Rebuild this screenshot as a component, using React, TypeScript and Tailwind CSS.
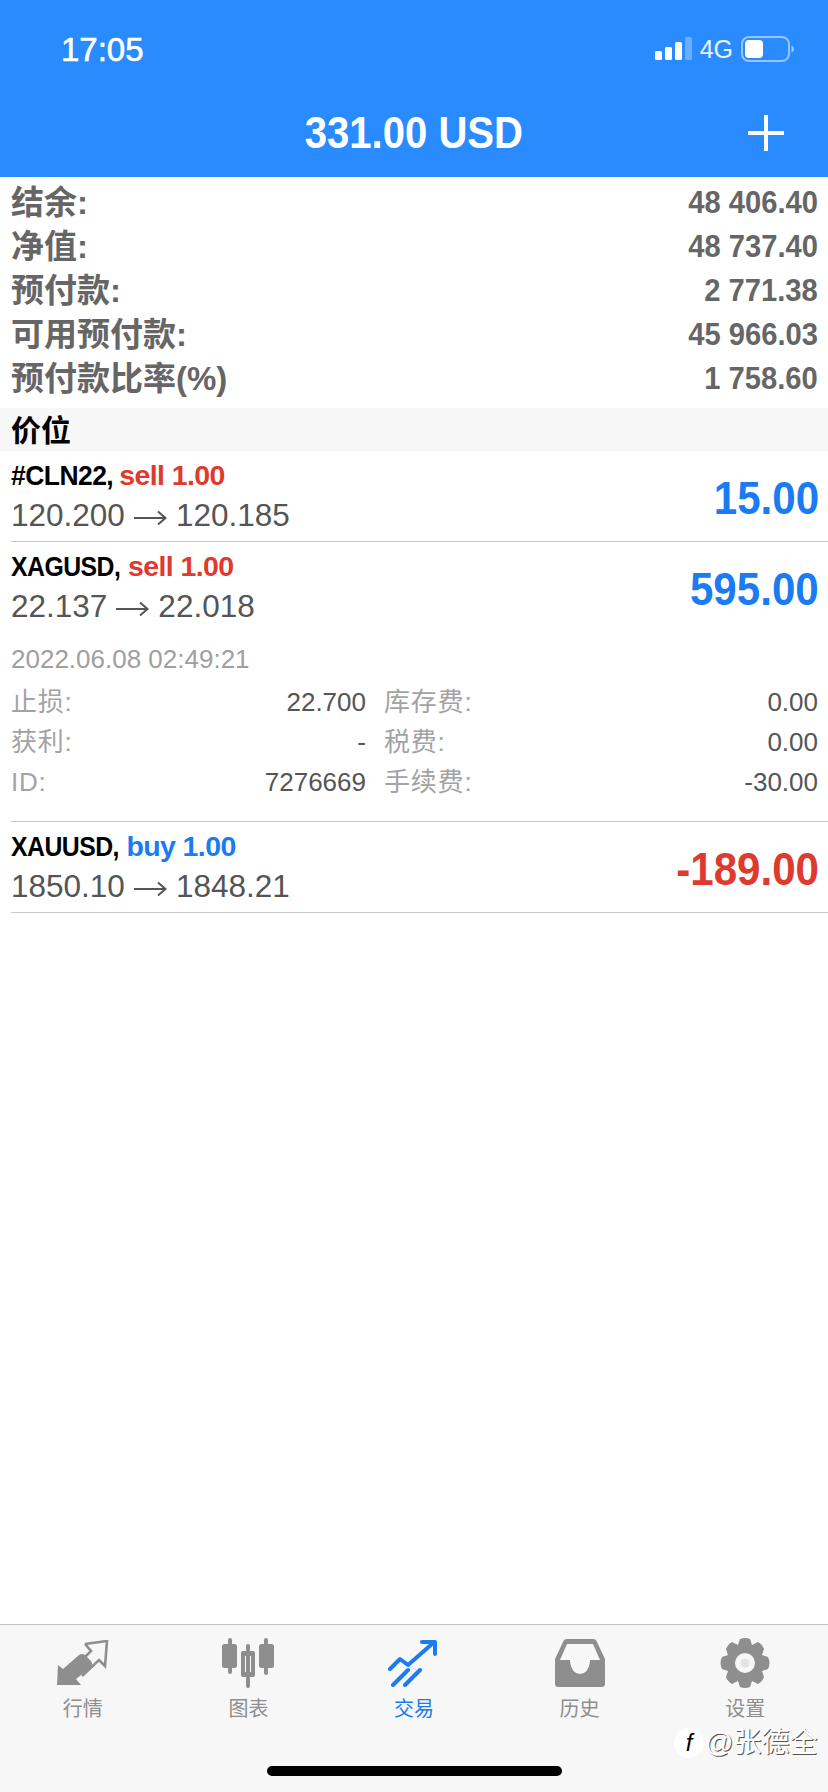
const font = { fontFamily: '"Liberation Sans","Noto Sans CJK SC",sans-serif' };

function Summary({ label, value }: { label: string; value: string }) {
  return (
    <div className="flex h-[44px] items-center justify-between pl-[11px] pr-[10px] text-[#666666]">
      <span className="text-[33px] font-semibold leading-none">{label}</span>
      <span className="origin-right scale-x-[0.94] text-[31px] font-bold leading-none">{value}</span>
    </div>
  );
}

function Arrow() {
  return (
    <svg className="mx-[9px] inline-block align-[-1px]" width="33" height="18" viewBox="0 0 33 18" fill="none" stroke="#555555" strokeWidth="2">
      <path d="M0 9H31M24 2.5L31.5 9L24 15.5" />
    </svg>
  );
}

function Position({ sym, symClass, side, sideClass, from, to, profit, profitClass }: { sym: string; symClass: string; side: string; sideClass: string; from: string; to: string; profit: string; profitClass: string }) {
  return (
    <div className="flex h-[90px] items-center justify-between pr-[9px]">
      <div className="flex flex-col pb-[2px]">
        <div className="h-[40px] text-[28.5px] font-bold leading-[40px] tracking-[-0.6px] text-black">
          <span className={symClass}>{sym},</span> <span className={sideClass}>{side}</span>
        </div>
        <div className="h-[40px] text-[31.5px] leading-[40px] text-[#555555]">
          {from}
          <Arrow />
          {to}
        </div>
      </div>
      <div className={`origin-right scale-x-[0.915] pt-[3px] text-[46px] font-bold leading-none ${profitClass}`}>{profit}</div>
    </div>
  );
}

function Detail({ label, value }: { label: string; value: string }) {
  return (
    <div className="flex h-[40px] items-center justify-between text-[26px] leading-none">
      <span className="tracking-[0.8px] text-[#a3a3a3]">{label}</span>
      <span className="text-[#555555]">{value}</span>
    </div>
  );
}

function Tab({ label, active, children }: { label: string; active?: boolean; children: React.ReactNode }) {
  return (
    <div className="flex flex-col items-center">
      <div className="flex h-[52px] w-[54px] items-center justify-center">{children}</div>
      <div className={`mt-[8px] text-[20px] leading-[24px] ${active ? "text-[#1a7bf2]" : "text-[#8e8e8e]"}`}>{label}</div>
    </div>
  );
}

export default function App() {
  return (
    <div className="flex h-[1792px] w-[828px] flex-col overflow-hidden bg-white" style={font}>
      <header className="h-[177px] shrink-0 bg-[#2a8bff] text-white">
        <div className="flex h-[98px] items-center justify-between pl-[61px] pr-[33px]">
          <span className="text-[33px] leading-none [-webkit-text-stroke:0.6px_white]">17:05</span>
          <div className="flex items-center">
            <svg width="38" height="24" viewBox="0 0 38 24" fill="#ffffff">
              <rect x="0" y="14" width="7" height="9" rx="1.5" />
              <rect x="10" y="10" width="7" height="13" rx="1.5" />
              <rect x="20" y="5" width="7" height="18" rx="1.5" />
              <rect x="30" y="0" width="7" height="23" rx="1.5" opacity="0.3" />
            </svg>
            <span className="ml-[7px] text-[25px] leading-none text-white/90">4G</span>
            <svg className="ml-[8px]" width="54" height="26" viewBox="0 0 54 26">
              <rect x="1" y="1" width="47" height="24" rx="7" fill="none" stroke="#ffffff" strokeOpacity="0.5" strokeWidth="2" />
              <rect x="4" y="4" width="18" height="18" rx="4" fill="#ffffff" />
              <path d="M50.5 9.5 C52.5 10.5 53 11.5 53 13 C53 14.5 52.5 15.5 50.5 16.5 Z" fill="#ffffff" fillOpacity="0.5" />
            </svg>
          </div>
        </div>
        <div className="grid h-[70px] grid-cols-[1fr_auto_1fr] items-center">
          <div />
          <div className="scale-x-[0.91] text-[44px] font-bold leading-none">331.00 USD</div>
          <div className="flex justify-end pr-[44px]">
            <svg width="36" height="36" viewBox="0 0 36 36" stroke="#ffffff" strokeWidth="4">
              <path d="M0 18H36M18 0V36" />
            </svg>
          </div>
        </div>
      </header>

      <section className="pt-[3px]">
        <Summary label="结余:" value="48 406.40" />
        <Summary label="净值:" value="48 737.40" />
        <Summary label="预付款:" value="2 771.38" />
        <Summary label="可用预付款:" value="45 966.03" />
        <Summary label="预付款比率(%)" value="1 758.60" />
      </section>

      <div className="mt-[8px] flex h-[43px] items-center bg-[#f7f7f7] pl-[11px] pt-[2px] text-[30px] font-semibold leading-none text-black">价位</div>

      <section className="pl-[11px]">
        <div className="border-b border-[#c8c8c8]">
          <Position sym="#CLN22" symClass="mr-[-9px] inline-block origin-left scale-x-[0.93]" side="sell 1.00" sideClass="text-[#df3a2e]" from="120.200" to="120.185" profit="15.00" profitClass="text-[#1a7bf2]" />
        </div>
        <div className="border-b border-[#c8c8c8]">
          <Position sym="XAGUSD" symClass="mr-[-16px] inline-block origin-left scale-x-[0.87]" side="sell 1.00" sideClass="text-[#df3a2e]" from="22.137" to="22.018" profit="595.00" profitClass="text-[#1a7bf2]" />
          <div className="pb-[19px] pr-[10px] pt-[9px]">
            <div className="flex h-[36px] items-center text-[26px] leading-none text-[#a0a0a0]">2022.06.08 02:49:21</div>
            <div className="mt-[5px] grid grid-cols-[355px_1fr] gap-x-[18px]">
              <Detail label="止损:" value="22.700" />
              <Detail label="库存费:" value="0.00" />
              <Detail label="获利:" value="-" />
              <Detail label="税费:" value="0.00" />
              <Detail label="ID:" value="7276669" />
              <Detail label="手续费:" value="-30.00" />
            </div>
          </div>
        </div>
        <div className="border-b border-[#c8c8c8]">
          <Position sym="XAUUSD" symClass="mr-[-16px] inline-block origin-left scale-x-[0.87]" side="buy 1.00" sideClass="text-[#1a7bf2]" from="1850.10" to="1848.21" profit="-189.00" profitClass="text-[#df3a2e]" />
        </div>
      </section>

      <div className="flex-1" />

      <footer className="relative h-[168px] shrink-0 border-t border-[#c4c4c4] bg-[#f7f7f7]">
        <div className="grid grid-cols-5 pt-[12px]">
          <Tab label="行情">
            <svg width="52" height="46" viewBox="0 0 52 46" fill="#8e8e8e">
              <path d="M0 45 L1 25 L6 29 L22 15 Q25 13 28 15 L34 21 Q36 24 34 27 L19 39 L24 45 Z" />
              <path d="M28 4 L50 1 L48 26 L42 20 L25 36" fill="none" stroke="#8e8e8e" strokeWidth="2.6" />
              <path d="M28 4 L34 11 L28 17" fill="none" stroke="#8e8e8e" strokeWidth="2.6" />
            </svg>
          </Tab>
          <Tab label="图表">
            <svg width="52" height="50" viewBox="0 0 52 50" fill="#8e8e8e">
              <rect x="6" y="0" width="4" height="36" rx="2" />
              <rect x="0" y="6" width="15" height="24" rx="2.5" />
              <rect x="24" y="6" width="4" height="44" rx="2" />
              <path fillRule="evenodd" d="M21 13 H31 Q33 13 33 15 V37 Q33 39 31 39 H21 Q19 39 19 37 V15 Q19 13 21 13 Z M23 18 V34 H29 V18 Z" />
              <rect x="42" y="0" width="4" height="37" rx="2" />
              <rect x="37" y="6" width="15" height="24" rx="2.5" />
            </svg>
          </Tab>
          <Tab label="交易" active>
            <svg width="52" height="48" viewBox="0 0 52 48" fill="none" stroke="#1a7bf2" strokeWidth="4" strokeLinecap="round" strokeLinejoin="round">
              <path d="M2 30 L12 20 L20 26 L44 5" />
              <path d="M34 3 H47 V15" />
              <path d="M5 46 L20 31" />
              <path d="M17 46 L32 31" />
            </svg>
          </Tab>
          <Tab label="历史">
            <svg width="50" height="48" viewBox="0 0 50 48" fill="#8e8e8e">
              <path fillRule="evenodd" d="M12 0 H38 Q41 0 42 3 L50 20 V45 Q50 48 47 48 H3 Q0 48 0 45 V20 L8 3 Q9 0 12 0 Z M12 5 L5 21 H15 V23 Q17 35 25 35 Q33 35 35 23 V21 H45 L38 5 Z" />
            </svg>
          </Tab>
          <Tab label="设置">
            <svg width="50" height="50" viewBox="0 0 50 50" fill="#8e8e8e">
              <path fillRule="evenodd" d="M20 1 Q25 -1 30 1 L32 7 L38 4 Q42 6 44 11 L42 17 L48 19 Q51 25 48 31 L42 33 L44 39 Q42 44 38 46 L32 43 L30 49 Q25 51 20 49 L18 43 L12 46 Q8 44 6 39 L8 33 L2 31 Q-1 25 2 19 L8 17 L6 11 Q8 6 12 4 L18 7 Z M25 15 A10 10 0 1 0 25 35 A10 10 0 1 0 25 15 Z" />
              <circle cx="25" cy="25" r="4.5" fill="#e4e4e4" />
            </svg>
          </Tab>
        </div>
        <div className="absolute bottom-[16px] left-[267px] h-[10px] w-[295px] rounded-full bg-black" />
        <div className="absolute left-[674px] top-[103px] flex items-center">
          <div className="flex h-[30px] w-[30px] items-center justify-center rounded-full bg-white text-[24px] italic leading-none text-black">f</div>
          <span className="ml-[1px] text-[28px] leading-none text-white [text-shadow:1px_1px_0_#555]">@张德全</span>
        </div>
      </footer>
    </div>
  );
}
